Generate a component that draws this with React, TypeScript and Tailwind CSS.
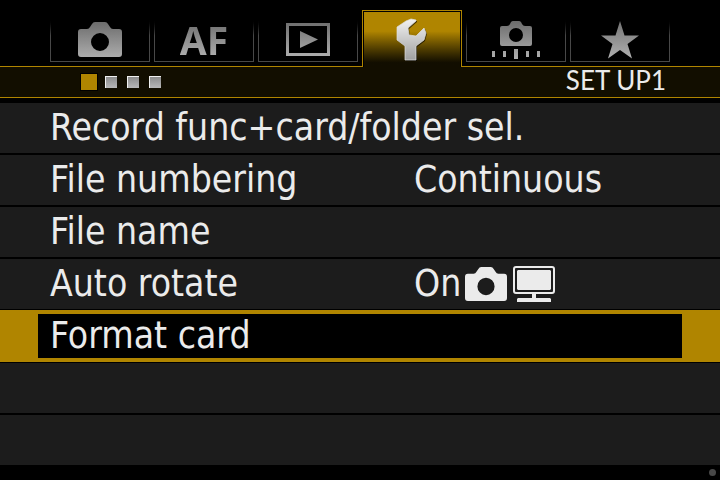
import { ReactNode, useState } from "react";

const CAMERA =
  "M3 7H9Q11 7 12 5L14 2Q15 0 17 0H27Q29 0 30 2L32 5Q33 7 35 7H41Q44 7 44 10V32Q44 35 41 35H3Q0 35 0 32V10Q0 7 3 7ZM22 11A9 9 0 1 0 22 29A9 9 0 1 0 22 11Z";

function Silver({ id, top, bottom, y1, y2 }: { id: string; top: string; bottom: string; y1: number; y2: number }) {
  return (
    <defs>
      <linearGradient id={id} gradientUnits="userSpaceOnUse" x1="0" x2="0" y1={y1} y2={y2}>
        <stop offset="0" stopColor={top} />
        <stop offset="1" stopColor={bottom} />
      </linearGradient>
    </defs>
  );
}

function ShootIcon() {
  return (
    <svg width="44" height="35" viewBox="0 0 44 35" aria-hidden="true">
      <Silver id="shoot" top="#6c6c6c" bottom="#acacac" y1={0} y2={35} />
      <path d={CAMERA} fill="url(#shoot)" fillRule="evenodd" />
    </svg>
  );
}

function PlayIcon() {
  return (
    <svg width="44" height="35" viewBox="0 0 44 35" aria-hidden="true">
      <Silver id="play" top="#707070" bottom="#acacac" y1={1} y2={34} />
      <path d="M0 1H44V34H0ZM3 4V31H41V4ZM14 9L32 17.500L14 26Z" fill="url(#play)" fillRule="evenodd" />
    </svg>
  );
}

function WrenchIcon() {
  return (
    <svg width="32" height="43" viewBox="0 0 32 43" aria-hidden="true">
      <Silver id="wrench" top="#f4f4f4" bottom="#a0a0a0" y1={0} y2={42} />
      <path
        d="M1 9L10 3L15 1L20 2L20 3L12 10L13 17L20 18L28 10L30 15L28 22L20 28V42H9V28L1 22Z"
        transform="translate(1 1)"
        fill="#000"
        opacity="0.6"
      />
      <path
        d="M1 9L10 3L15 1L20 2L20 3L12 10L13 17L20 18L28 10L30 15L28 22L20 28V42H9V28L1 22Z"
        fill="url(#wrench)"
        stroke="#dedede"
        strokeWidth="0.700"
      />
    </svg>
  );
}

function CustomIcon() {
  return (
    <svg width="48" height="38" viewBox="0 0 48 38" aria-hidden="true">
      <Silver id="custom" top="#6c6c6c" bottom="#b0b0b0" y1={0} y2={38} />
      <path
        d="M10 5H15Q17 5 18 3L19 1Q20 0 21 0H27Q28 0 29 1L30 3Q31 5 33 5H38Q40 5 40 7V23Q40 25 38 25H10Q8 25 8 23V7Q8 5 10 5ZM24 7A7 7 0 1 0 24 21A7 7 0 1 0 24 7ZM0 30h3v6h-3ZM11 30h3v6h-3ZM22 28h4v10h-4ZM34 30h3v6h-3ZM45 30h3v6h-3Z"
        fill="url(#custom)"
        fillRule="evenodd"
      />
    </svg>
  );
}

function StarIcon() {
  return (
    <svg width="40" height="38" viewBox="0 0 40 38" aria-hidden="true">
      <Silver id="star" top="#747474" bottom="#b0b0b0" y1={0} y2={38} />
      <path d="M20 0L24.500 14.500H39L27.500 23L32 37.500L20 29L8 37.500L12.500 23L1 14.500H15.500Z" fill="url(#star)" />
    </svg>
  );
}

function CameraGlyph() {
  return (
    <svg width="42" height="34" viewBox="0 0 44 35" preserveAspectRatio="none" aria-hidden="true">
      <path d={CAMERA} fill="#ebebeb" fillRule="evenodd" />
    </svg>
  );
}

function MonitorGlyph() {
  return (
    <svg width="42" height="36" viewBox="0 0 42 36" aria-hidden="true">
      <rect x="1" y="1" width="40" height="26" rx="2" fill="none" stroke="#ebebeb" strokeWidth="2" />
      <path d="M5 4H37L38 5V23L37 24H5L4 23V5ZM19 28H23V32H37L38 33V36H4V33L5 32H19Z" fill="#ebebeb" />
    </svg>
  );
}

const tabs: { name: string; icon: ReactNode }[] = [
  { name: "Shooting", icon: <ShootIcon /> },
  {
    name: "AF",
    icon: (
      <span className="bg-linear-to-b from-[#6c6c6c] to-[#b4b4b4] bg-clip-text font-['Noto_Sans',sans-serif] text-[39px] leading-[40px] font-bold text-transparent">
        AF
      </span>
    ),
  },
  { name: "Playback", icon: <PlayIcon /> },
  { name: "Set up", icon: <WrenchIcon /> },
  { name: "Custom functions", icon: <CustomIcon /> },
  { name: "My menu", icon: <StarIcon /> },
];

const rows: { label: string; value?: ReactNode }[] = [
  { label: "Record func+card/folder sel." },
  { label: "File numbering", value: "Continuous" },
  { label: "File name" },
  {
    label: "Auto rotate",
    value: (
      <>
        On
        <span className="ml-1 flex items-center gap-1.5">
          <CameraGlyph />
          <MonitorGlyph />
        </span>
      </>
    ),
  },
  { label: "Format card" },
];

export default function App() {
  const [tab, setTab] = useState(3);
  const [page, setPage] = useState(0);
  const [selected, setSelected] = useState(4);

  return (
    <div className="flex min-h-screen flex-col bg-black font-['DejaVu_Sans_Condensed',Roboto,sans-serif] text-[#ebebeb]">
      <div role="tablist" aria-label="Menus" className="grid grid-cols-6 items-end gap-1 px-[50px] pt-2.5">
        {tabs.map((t, i) =>
          i === tab ? (
            <button
              key={t.name}
              role="tab"
              aria-selected="true"
              aria-label={t.name}
              className="z-10 -mb-px h-[57px] border border-b-0 border-[#b08500] bg-black p-px pb-0"
            >
              <span className="flex h-full justify-center bg-linear-to-b from-[#b08500] from-35% to-[#120e00] to-92% pt-1.5">
                {t.icon}
              </span>
            </button>
          ) : (
            <button
              key={t.name}
              role="tab"
              aria-selected="false"
              aria-label={t.name}
              onClick={() => setTab(i)}
              className="mb-1 h-11 bg-linear-to-b from-black to-[#484848] to-40% p-px pt-0"
            >
              <span className="flex h-full items-center justify-center bg-black">{t.icon}</span>
            </button>
          ),
        )}
      </div>

      <div className="flex h-8 items-center justify-between border-y border-[#b08500] bg-[#120e00] pr-[54px] pl-20">
        <nav aria-label="Pages" className="flex items-center gap-2">
          {[0, 1, 2, 3].map((n) => (
            <button
              key={n}
              aria-label={`Page ${n + 1}`}
              aria-current={n === page}
              onClick={() => setPage(n)}
              className={
                n === page
                  ? "-mr-px size-[18px] border border-black bg-[#b08500]"
                  : "mr-0.5 size-3 border-t border-l border-[#f0f0f0] bg-linear-to-b from-[#8c8c8c] to-[#b8b8b8]"
              }
            />
          ))}
        </nav>
        <h1 className="pb-1 font-[Lato,sans-serif] text-[26px] leading-[26px]">SET UP1</h1>
      </div>

      <ul className="mt-[5px] flex flex-col gap-0.5">
        {rows.map((r, i) => (
          <li key={r.label} className={i === selected ? "-my-px bg-[#b08500] px-[38px] py-1" : "bg-[#1c1c1c] px-[38px] py-[3px]"}>
            <button
              onClick={() => setSelected(i)}
              className={
                i === selected
                  ? "flex h-11 w-full items-center bg-black px-3 text-left text-[37px] leading-[44px]"
                  : "flex h-11 w-full items-center px-3 text-left text-[37px] leading-[44px]"
              }
            >
              <span className={r.value ? "w-[364px] whitespace-nowrap" : "whitespace-nowrap"}>{r.label}</span>
              {r.value && <span className="flex items-center">{r.value}</span>}
            </button>
          </li>
        ))}
        <li className="h-[50px] bg-[#1c1c1c]" />
        <li className="h-[50px] bg-[#1c1c1c]" />
      </ul>

      <footer className="flex flex-1 items-center justify-end pr-1">
        <span className="size-[7px] rounded-full bg-[#484848]" />
      </footer>
    </div>
  );
}
